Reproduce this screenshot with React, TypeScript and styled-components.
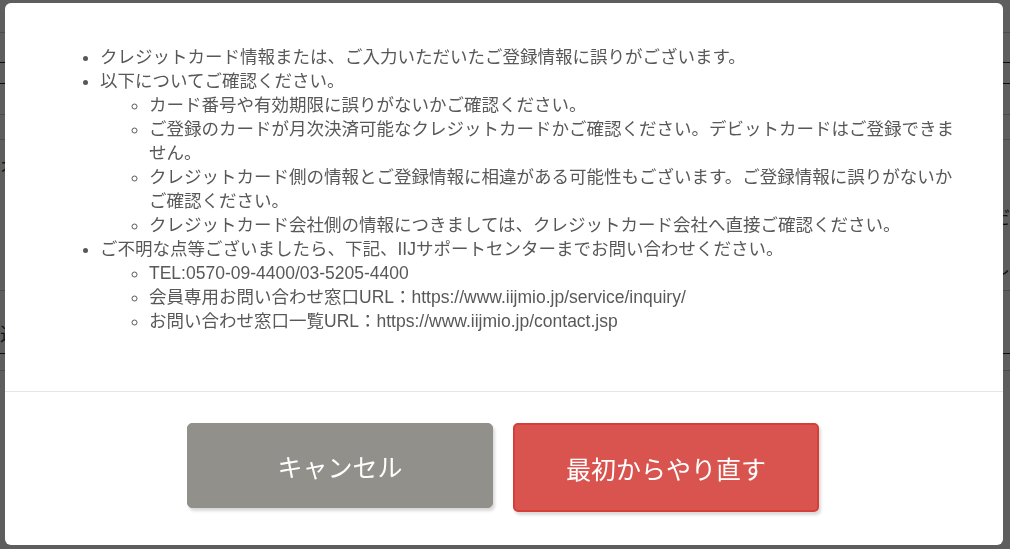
import React from "react";
import styled, { createGlobalStyle } from "styled-components";

const GlobalStyle = createGlobalStyle`
  html, body { margin: 0; padding: 0; }
  body {
    width: 1010px;
    height: 549px;
    overflow: hidden;
    font-family: "Liberation Sans", "Noto Sans CJK JP", sans-serif;
  }
`;

const BehindPage = styled.div`
  width: 1010px;
  height: 549px;
  background: #ffffff;
  display: flex;
  flex-direction: column;
  overflow: hidden;
`;

const BehindRow = styled.div<{ $h: number; $line?: "dark" | "light" | "none" }>`
  height: ${(p) => p.$h}px;
  flex-shrink: 0;
  border-bottom: 1px solid
    ${(p) => (p.$line === "dark" ? "#222" : p.$line === "none" ? "transparent" : "#cfcfcf")};
  display: flex;
  justify-content: space-between;
  align-items: center;
  font-family: "Noto Sans CJK JP", sans-serif;
  font-size: 18px;
  color: #333;
  box-sizing: border-box;
`;

const Overlay = styled.div`
  position: fixed;
  inset: 0;
  background: rgba(0, 0, 0, 0.63);
  display: flex;
  align-items: flex-start;
  padding: 3px 7px 4px 5px;
  box-sizing: border-box;
`;

const Modal = styled.div`
  width: 998px;
  height: 542px;
  background: #ffffff;
  border-radius: 6px;
  display: flex;
  flex-direction: column;
  overflow: hidden;
`;

const Body = styled.div`
  flex: 1;
  padding: 42px 40px 0 55px;
`;

const List = styled.ul<{ $nested?: boolean }>`
  margin: 0;
  padding-left: ${(p) => (p.$nested ? 49 : 40)}px;
  list-style-type: ${(p) => (p.$nested ? "circle" : "disc")};
  color: #585858;
  font-size: 17.5px;
  line-height: 24px;
`;

const Item = styled.li``;

const Footer = styled.div`
  flex-shrink: 0;
  border-top: 1px solid #e6e6e6;
  height: 154px;
  padding: 31px 2px 0 0;
  box-sizing: border-box;
  display: flex;
  justify-content: center;
  align-items: flex-start;
  gap: 20px;
`;

const Button = styled.button<{ $variant: "cancel" | "danger" }>`
  width: 306px;
  height: ${(p) => (p.$variant === "danger" ? 89 : 85)}px;
  border-radius: 5px;
  border: ${(p) => (p.$variant === "danger" ? "2px solid #d43f3a" : "1px solid #92908b")};
  background: ${(p) => (p.$variant === "danger" ? "#d9534f" : "#92908b")};
  color: #ffffff;
  font-family: "Noto Sans CJK JP", "Liberation Sans", sans-serif;
  font-size: 25px;
  box-shadow: 2px 3px 3px rgba(0, 0, 0, 0.15);
  display: flex;
  align-items: center;
  justify-content: center;
  padding: 0;
  cursor: pointer;
`;

export default function App() {
  return (
    <>
      <GlobalStyle />
      <BehindPage>
        <BehindRow $h={33} />
        <BehindRow $h={30} $line="dark" />
        <BehindRow $h={21} $line="dark" />
        <BehindRow $h={31} />
        <BehindRow $h={25} />
        <BehindRow $h={50} $line="none">
          <span>オ</span>
        </BehindRow>
        <BehindRow $h={52} $line="none">
          <span />
          <span>だ</span>
        </BehindRow>
        <BehindRow $h={49}>
          <span />
          <span>し</span>
        </BehindRow>
        <BehindRow $h={22} $line="none" />
        <BehindRow $h={41} $line="dark">
          <span>込</span>
        </BehindRow>
        <BehindRow $h={17} />
        <BehindRow $h={159} $line="none" />
      </BehindPage>
      <Overlay>
        <Modal role="dialog">
          <Body>
            <List>
              <Item>クレジットカード情報または、ご入力いただいたご登録情報に誤りがございます。</Item>
              <Item>
                以下についてご確認ください。
                <List $nested>
                  <Item>カード番号や有効期限に誤りがないかご確認ください。</Item>
                  <Item>
                    ご登録のカードが月次決済可能なクレジットカードかご確認ください。デビットカードはご登録できません。
                  </Item>
                  <Item>
                    クレジットカード側の情報とご登録情報に相違がある可能性もございます。ご登録情報に誤りがないかご確認ください。
                  </Item>
                  <Item>クレジットカード会社側の情報につきましては、クレジットカード会社へ直接ご確認ください。</Item>
                </List>
              </Item>
              <Item>
                ご不明な点等ございましたら、下記、IIJサポートセンターまでお問い合わせください。
                <List $nested>
                  <Item>TEL:0570-09-4400/03-5205-4400</Item>
                  <Item>会員専用お問い合わせ窓口URL：https://www.iijmio.jp/service/inquiry/</Item>
                  <Item>お問い合わせ窓口一覧URL：https://www.iijmio.jp/contact.jsp</Item>
                </List>
              </Item>
            </List>
          </Body>
          <Footer>
            <Button $variant="cancel">キャンセル</Button>
            <Button $variant="danger">最初からやり直す</Button>
          </Footer>
        </Modal>
      </Overlay>
    </>
  );
}
